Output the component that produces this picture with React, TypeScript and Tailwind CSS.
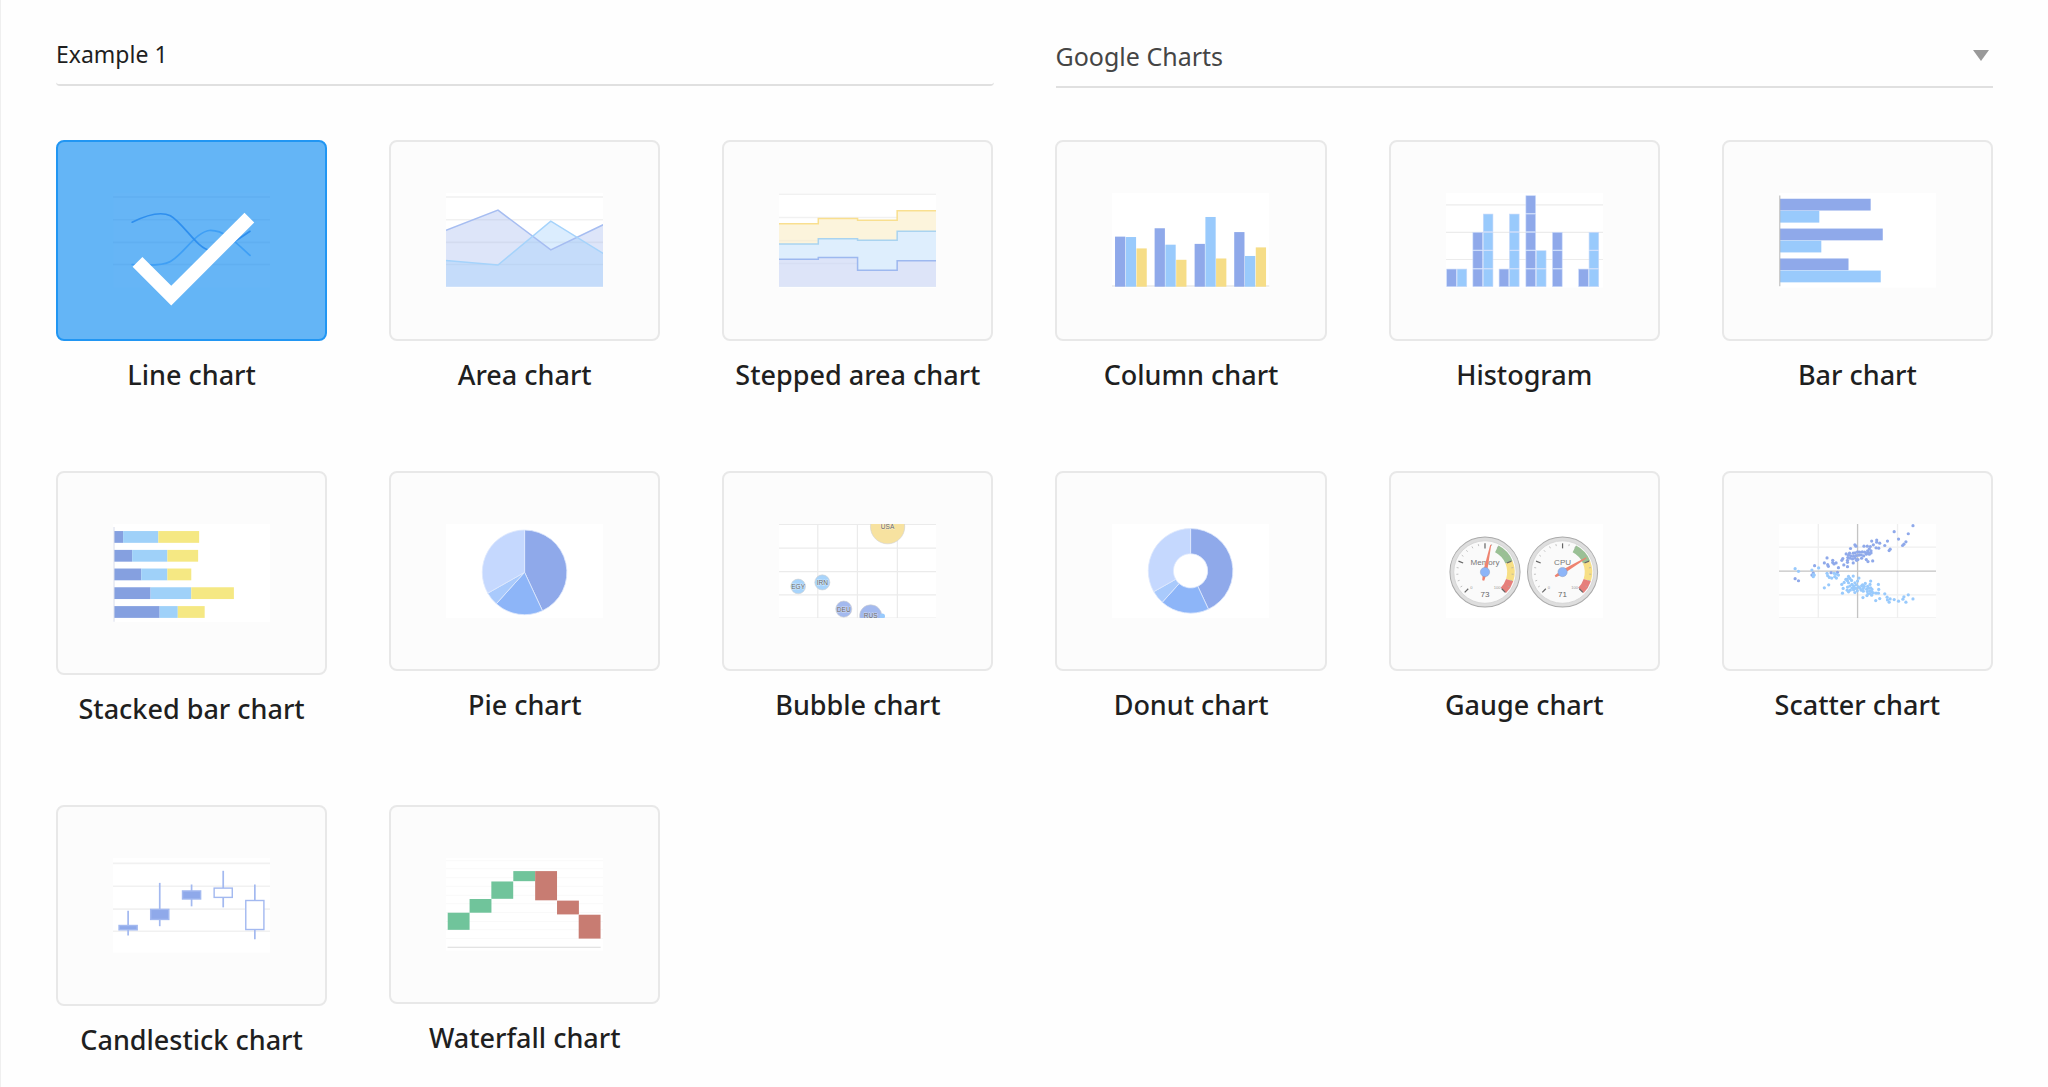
import React, { useState } from 'react';

const BLUE = '#8fa9ea';
const SKY = '#99cafc';
const YELLOW = '#f6dd87';
const GRID = '#f1f1f1';

interface ThumbProps {
  height?: number;
  children: React.ReactNode;
}

const Thumb: React.FC<ThumbProps> = ({ height = 94, children }) => (
  <svg viewBox={`0 0 156 ${height}`} className="block w-full" aria-hidden="true">
    <rect width="156" height={height} fill="#ffffff" />
    {children}
  </svg>
);

const HLines: React.FC<{ ys: number[]; color?: string; width?: number }> = ({ ys, color = GRID, width = 1.6 }) => (
  <>
    {ys.map((y) => (
      <line key={y} x1="0" x2="156" y1={y} y2={y} stroke={color} strokeWidth={width} />
    ))}
  </>
);

const LineThumb = () => (
  <svg viewBox="0 0 156 94" className="block w-full" aria-hidden="true">
    <rect width="156" height="94" fill="#66b5f6" />
    <HLines ys={[4, 26.5, 49, 71]} color="#60aff1" />
    <g fill="none" strokeWidth="1.7" strokeLinecap="round">
      <path d="M19 71C32 72 48 73 57 68C71 60 82 38 97 37C110 37 120 47 136 62" stroke="#3f9ff5" />
      <path d="M19 29C32 22.500 47 18 57 22.500C70 30 84 56 97 57C108 58 122 47 136 38" stroke="#2f8fee" />
    </g>
  </svg>
);

const AreaThumb = () => (
  <Thumb>
    <HLines ys={[4, 26.5, 49, 71]} />
    <path d="M0 37L51.600 17L104 56.500L156 31.500V93H0z" fill="#8fa9ea" fillOpacity="0.3" />
    <path d="M0 67L51.600 71.500L104 28L156 60V93H0z" fill="#99cafc" fillOpacity="0.35" />
    <path d="M0 37L51.600 17L104 56.500L156 31.500" fill="none" stroke="#a6bdf1" strokeWidth="1.5" />
    <path d="M0 67L51.600 71.500L104 28L156 60" fill="none" stroke="#a5d3fb" strokeWidth="1.5" />
  </Thumb>
);

const SteppedThumb = () => (
  <Thumb>
    <HLines ys={[1.3, 24.3]} />
    <path d="M0 30.500H39V25.300H78V27H117.300V17.700H156V93H0z" fill="#fcf4dc" />
    <HLines ys={[47.3]} color="#f5eed9" />
    <path d="M0 50.700H39V45.300H78V47H117.300V38H156V93H0z" fill="#deeefd" />
    <path d="M0 65.700H39V64H78V76.700H117.300V67.300H156V93H0z" fill="#dde4f8" />
    <line x1="0" x2="78" y1="70" y2="70" stroke="#d7def3" strokeWidth="1.6" />
    <g fill="none" strokeWidth="1.5">
      <path d="M0 30.500H39V25.300H78V27H117.300V17.700H156" stroke="#f9df8f" />
      <path d="M0 50.700H39V45.300H78V47H117.300V38H156" stroke="#a9d3f0" />
      <path d="M0 65.700H39V64H78V76.700H117.300V67.300H156" stroke="#9db8ef" />
    </g>
  </Thumb>
);

const columns: [number, number, string][] = [
  [3, 43.3, BLUE], [13.7, 43.7, SKY], [24.3, 55, YELLOW],
  [42.3, 35, BLUE], [53, 51.3, SKY], [63.7, 66.3, YELLOW],
  [82, 50.5, BLUE], [92.7, 23.8, SKY], [103.3, 65, YELLOW],
  [121.3, 38.8, BLUE], [132, 62.5, SKY], [142.7, 54, YELLOW],
];

const ColumnThumb = () => (
  <Thumb>
    <HLines ys={[92.3]} color="#e8e8e8" />
    {columns.map(([x, y, fill]) => (
      <rect key={x} x={x} y={y} width="10.2" height={93 - y} fill={fill} />
    ))}
  </Thumb>
);

const bins: [number, number, string][] = [
  [0.7, 1, BLUE], [11, 1, SKY], [26.7, 3, BLUE], [37, 4, SKY],
  [52.7, 1, BLUE], [63, 4, SKY], [79.3, 5, BLUE], [89.7, 2, SKY],
  [105.7, 3, BLUE], [131.7, 1, BLUE], [142, 3, SKY],
];

const HistogramThumb = () => (
  <Thumb>
    <HLines ys={[11.7, 39, 66]} color="#ececec" width={1.2} />
    {bins.map(([x, count, fill]) =>
      Array.from({ length: count }, (_, i) => (
        <rect key={`${x}-${i}`} x={x} y={75.5 - i * 18.2} width="9.6" height="17.5" fill={fill} stroke="#c9dafa" strokeWidth="0.6" />
      ))
    )}
  </Thumb>
);

const bars: [number, number, string][] = [
  [5.7, 90, BLUE], [17.7, 39, SKY], [35.3, 102, BLUE],
  [47.3, 41, SKY], [65, 68, BLUE], [77, 100, SKY],
];

const BarThumb = () => (
  <Thumb>
    {bars.map(([y, w, fill]) => (
      <rect key={y} x="1" y={y} width={w} height="11.7" fill={fill} />
    ))}
    <line x1="0.800" x2="0.800" y1="2.500" y2="92.500" stroke="#b5b5b5" />
  </Thumb>
);

const stacks = [
  [7, 10, 45, 85.5],
  [25.7, 19, 54, 84.5],
  [44.2, 28, 54, 77.7],
  [62.8, 37.3, 77.7, 120],
  [81.5, 46.3, 64.3, 91],
];

const StackedThumb = () => (
  <Thumb height={98}>
    {stacks.map(([y, a, b, c]) => (
      <g key={y}>
        <rect x="1" y={y} width={a - 1} height="11.7" fill="#85a0e0" />
        <rect x={a} y={y} width={b - a} height="11.7" fill="#9fd1f9" />
        <rect x={b} y={y} width={c - b} height="11.7" fill="#f5e883" />
      </g>
    ))}
    <line x1="1" x2="1" y1="3" y2="97" stroke="#d9dcea" />
  </Thumb>
);

const slices: [number, number, string][] = [
  [0, 155, BLUE],
  [155, 222, '#8db5f8'],
  [222, 240.5, '#a9cafc'],
  [240.5, 360, '#c5d8fe'],
];

const polar = (cx: number, cy: number, r: number, deg: number) => {
  const a = (deg * Math.PI) / 180;
  return `${cx + r * Math.sin(a)} ${cy - r * Math.cos(a)}`;
};

const ringPath = (cx: number, cy: number, inner: number, outer: number, from: number, to: number) =>
  `M${polar(cx, cy, inner, from)}L${polar(cx, cy, outer, from)}A${outer} ${outer} 0 0 1 ${polar(cx, cy, outer, to)}` +
  `L${polar(cx, cy, inner, to)}A${inner} ${inner} 0 0 0 ${polar(cx, cy, inner, from)}z`;

const RoundThumb: React.FC<{ inner: number; cy: number }> = ({ inner, cy }) => (
  <Thumb>
    {slices.map(([from, to, fill]) => (
      <path key={from} d={ringPath(78, cy, inner, 42, from, to)} fill={fill} stroke="#dfe9fd" strokeWidth="0.8" />
    ))}
  </Thumb>
);

const bubbles: [string, number, number, number, string][] = [
  ['USA', 107.8, 2.7, 17, '#f7e2a0'],
  ['EGY', 19, 62, 7.3, '#a8d4fb'],
  ['IRN', 43, 58, 7.5, '#a8d4fb'],
  ['DEU', 64.3, 84.5, 8, '#a3b9ee'],
  ['RUS', 91, 91.2, 11, '#a3b9ee'],
];

const BubbleThumb = () => (
  <Thumb>
    <HLines ys={[0.5, 24, 47.3, 70.3, 93.3]} color="#ebebeb" width={1.2} />
    {[38.5, 77.8, 117.5].map((x) => (
      <line key={x} x1={x} x2={x} y1="0" y2="93.500" stroke="#ebebeb" strokeWidth="1.2" />
    ))}
    {bubbles.map(([name, x, y, r, fill]) => (
      <g key={name}>
        <circle cx={x} cy={y} r={r} fill={fill} stroke="#d0d0d0" strokeWidth="0.6" />
        {name === 'RUS' && <circle cx="102.500" cy="91.500" r="2.700" fill={SKY} />}
        <text x={x} y={y + 2.4} textAnchor="middle" fontSize="6.5" fill="#666666" stroke="#ffffff" strokeOpacity="0.5" strokeWidth="1" paintOrder="stroke" fontFamily="Liberation Sans, sans-serif">
          {name}
        </text>
      </g>
    ))}
  </Thumb>
);

const Gauge: React.FC<{ cx: number; name: string; value: number; angle: number }> = ({ cx, name, value, angle }) => {
  const cy = 47.7;
  return (
    <g fontFamily="Liberation Sans, sans-serif" textAnchor="middle">
      <circle cx={cx} cy={cy} r="34.800" fill="#dedede" stroke="#aaaaaa" />
      <circle cx={cx} cy={cy} r="31" fill="#fafafa" stroke="#d2d2d2" strokeWidth="0.8" />
      <path d={ringPath(cx, cy, 22, 29.5, 27, 67.5)} fill="#9ac095" />
      <path d={ringPath(cx, cy, 22, 29.5, 67.5, 108)} fill="#f7df85" />
      <path d={ringPath(cx, cy, 22, 29.5, 108, 135)} fill="#e67f7b" />
      {Array.from({ length: 21 }, (_, i) => {
        const deg = -135 + i * 13.5;
        const major = i % 5 === 0;
        return (
          <path
            key={i}
            d={`M${polar(cx, cy, major ? 23.5 : 26.5, deg)}L${polar(cx, cy, 28.5, deg)}`}
            stroke={major ? '#666666' : '#aaaaaa'}
            strokeWidth={major ? 1.2 : 0.7}
          />
        );
      })}
      <text x={cx} y="41" fontSize="8" fill="#777777">{name}</text>
      <text x={cx} y="72.500" fontSize="8" fill="#666666">{value}</text>
      <text x={cx - 13.5} y="65" fontSize="4" fill="#999999">0</text>
      <text x={cx + 12} y="65" fontSize="4" fill="#999999">100</text>
      <path d="M-2 0L-0.500 -27.500H0.500L2 0L1 8.500H-1z" transform={`translate(${cx} ${cy}) rotate(${angle})`} fill="#ee8370" />
      <circle cx={cx} cy={cy} r="4.600" fill="#8db5f8" stroke="#8a9cc0" strokeWidth="0.5" />
    </g>
  );
};

const GaugeThumb = () => (
  <Thumb>
    <Gauge cx={38.7} name="Memory" value={73} angle={12} />
    <Gauge cx={115.7} name="CPU" value={71} angle={59} />
  </Thumb>
);

const upper = [
  [457, 46], [443, 70], [401, 64], [414, 86], [436, 94], [430, 101], [426, 105], [381, 92], [373, 105], [389, 116],
  [386, 120], [349, 89], [349, 95], [358, 98], [334, 92], [339, 103], [347, 112], [355, 113], [284, 103], [287, 107],
  [271, 114], [311, 107], [321, 107], [330, 108], [327, 115], [322, 121], [332, 121], [326, 127], [321, 127], [332, 127],
  [313, 125], [306, 124], [298, 125], [292, 124], [285, 127], [279, 128], [268, 128], [258, 130], [265, 134], [272, 136],
  [280, 137], [288, 135], [296, 134], [303, 133], [310, 136], [318, 131], [327, 131], [263, 141], [270, 143], [277, 145],
  [285, 143], [293, 147], [304, 143], [289, 149], [318, 147], [323, 153], [337, 151], [248, 144], [245, 149], [262, 149],
  [262, 155], [279, 157], [251, 163], [262, 168], [201, 142], [193, 157], [218, 149], [218, 156], [228, 157], [222, 160],
  [203, 162], [205, 167], [235, 171], [232, 185], [164, 165], [213, 186], [106, 204], [116, 210], [160, 187], [156, 193],
];

const lower = [
  [106, 174], [116, 182], [176, 172], [156, 178], [160, 192], [163, 193], [160, 198], [201, 188], [203, 195], [208, 200],
  [215, 202], [222, 188], [228, 190], [235, 193], [229, 202], [224, 198], [206, 222], [193, 231], [279, 196], [265, 197],
  [261, 205], [269, 203], [274, 209], [262, 210], [257, 206], [296, 202], [252, 215], [245, 221], [265, 216], [292, 211],
  [284, 216], [249, 233], [247, 247], [262, 229], [261, 238], [269, 226], [275, 221], [280, 225], [288, 222], [295, 228],
  [282, 230], [276, 232], [270, 238], [265, 243], [280, 237], [287, 233], [291, 240], [284, 245], [299, 232], [304, 225],
  [307, 222], [312, 227], [315, 218], [331, 211], [329, 221], [322, 227], [309, 233], [303, 238], [309, 241], [319, 235],
  [325, 232], [331, 231], [335, 236], [321, 242], [328, 240], [334, 243], [323, 249], [329, 248], [339, 246], [320, 254],
  [334, 253], [308, 260], [354, 221], [355, 236], [347, 247], [354, 247], [373, 249], [358, 263], [346, 269], [380, 259],
  [389, 264], [381, 267], [386, 274], [401, 266], [414, 271], [427, 265], [430, 258], [443, 252], [436, 274], [457, 264],
];

const ScatterThumb = () => (
  <svg viewBox="58 41 468 282" className="block w-full" aria-hidden="true">
    <rect x="58" y="41" width="468" height="282" fill="#ffffff" />
    <path d="M58 110H526M58 252H526M58 321H526M175 41V321M411 41V321" stroke="#efefef" strokeWidth="4" />
    <path d="M58 181.500H526M292 41V321" stroke="#c4c4c4" strokeWidth="4" />
    {upper.map(([x, y]) => (
      <circle key={`${x}-${y}`} cx={x} cy={y} r="4.800" fill={BLUE} />
    ))}
    {lower.map(([x, y]) => (
      <circle key={`${x}-${y}`} cx={x} cy={y} r="4.800" fill={SKY} />
    ))}
  </svg>
);

// x, wick top, wick bottom, body top, body bottom, filled
const candles: [number, number, number, number, number, boolean][] = [
  [15, 52.3, 77, 67, 71.3, true],
  [46.4, 24.7, 67.7, 51, 61, true],
  [78, 26.3, 48, 32.7, 40.7, true],
  [109.4, 12.7, 49, 29.9, 39.1, false],
  [140.8, 26.3, 80.7, 42.2, 71, false],
];

const CandlestickThumb = () => (
  <Thumb>
    <HLines ys={[5.3, 28, 50.7, 72.7]} />
    {candles.map(([x, top, bottom, open, close, filled]) => (
      <g key={x} stroke="#a3b9f0">
        <line x1={x} x2={x} y1={top} y2={bottom} strokeWidth="1.7" />
        <rect x={x - 9} y={open} width="18" height={close - open} fill={filled ? BLUE : '#ffffff'} strokeWidth="1.4" />
      </g>
    ))}
  </Thumb>
);

const steps: [number, number, number, boolean][] = [
  [1.7, 54.3, 71.3, true],
  [23.4, 40.7, 54.3, true],
  [45, 23.3, 40.5, true],
  [66.8, 13, 23, true],
  [88.5, 13, 42, false],
  [110.2, 42.3, 56, false],
  [131.7, 56.3, 80, false],
];

const WaterfallThumb = () => (
  <Thumb height={92}>
    <HLines ys={[2.7, 10.7, 19.5, 28, 37, 45.5, 54, 63, 71.3, 80]} color="#f9f9f9" width={1} />
    {steps.map(([x, top, bottom, up]) => (
      <rect key={x} x={x} y={top} width="21.700" height={bottom - top} fill={up ? '#70c49b' : '#c87c72'} />
    ))}
    <line x1="1.500" x2="153.500" y1="88.700" y2="88.700" stroke="#dadada" />
  </Thumb>
);

const charts = [
  { name: 'Line chart', thumb: <LineThumb /> },
  { name: 'Area chart', thumb: <AreaThumb /> },
  { name: 'Stepped area chart', thumb: <SteppedThumb /> },
  { name: 'Column chart', thumb: <ColumnThumb /> },
  { name: 'Histogram', thumb: <HistogramThumb /> },
  { name: 'Bar chart', thumb: <BarThumb /> },
  { name: 'Stacked bar chart', thumb: <StackedThumb /> },
  { name: 'Pie chart', thumb: <RoundThumb inner={0} cy={48} /> },
  { name: 'Bubble chart', thumb: <BubbleThumb /> },
  { name: 'Donut chart', thumb: <RoundThumb inner={17} cy={46.5} /> },
  { name: 'Gauge chart', thumb: <GaugeThumb /> },
  { name: 'Scatter chart', thumb: <ScatterThumb /> },
  { name: 'Candlestick chart', thumb: <CandlestickThumb /> },
  { name: 'Waterfall chart', thumb: <WaterfallThumb /> },
];

const App: React.FC = () => {
  const [title, setTitle] = useState('Example 1');
  const [library, setLibrary] = useState('Google Charts');
  const [selected, setSelected] = useState('Line chart');

  return (
    <main className="min-h-screen border-l border-[#efefef] bg-[#fefefe] pt-7 pr-[55px] pb-8 pl-[55px] font-['Noto_Sans',sans-serif] text-[#1f1f1f]">
      <div className="grid grid-cols-2 items-start gap-x-[62px]">
        <input
          aria-label="Title"
          value={title}
          onChange={(e) => setTitle(e.target.value)}
          className="h-[58px] w-full rounded border-b-2 border-[#e0e0e0] bg-transparent pb-1 text-[23px] outline-none"
        />
        <div className="relative">
          <select
            aria-label="Chart library"
            value={library}
            onChange={(e) => setLibrary(e.target.value)}
            className="block h-[60px] w-full appearance-none border-b-2 border-[#e0e0e0] bg-transparent text-[25px] text-[#454545] outline-none"
          >
            <option>Google Charts</option>
          </select>
          <svg viewBox="0 0 16 11" className="pointer-events-none absolute top-[22px] right-1 h-[11px] w-4" aria-hidden="true">
            <path d="M0 0h16L8 11z" fill="#999999" />
          </svg>
        </div>
      </div>

      <div className="mt-[52px] grid grid-cols-6 items-start gap-x-[62px] gap-y-[70px]">
        {charts.map(({ name, thumb }) => {
          const active = name === selected;
          return (
            <button key={name} type="button" aria-pressed={active} onClick={() => setSelected(name)} className="block w-full text-center">
              <span
                className={`relative block rounded-lg border-2 px-[55px] py-[51px] ${
                  active ? 'border-[#2196f3] bg-[#64b5f6]' : 'border-[#e8e8e8] bg-[#fcfcfc]'
                }`}
              >
                {thumb}
                {active && (
                  <span className="absolute inset-x-0 top-[34px] bottom-0 flex items-center justify-center">
                    <svg viewBox="0 0 24 24" className="h-[166px] w-[166px] shrink-0" aria-hidden="true">
                      <path d="M9 16.170L4.830 12l-1.420 1.410L9 19 21 7l-1.410-1.410z" fill="#ffffff" />
                    </svg>
                  </span>
                )}
              </span>
              <span className="mt-3 mb-1 block text-[27px] leading-[44px] font-medium whitespace-nowrap">{name}</span>
            </button>
          );
        })}
      </div>
    </main>
  );
};

export default App;
